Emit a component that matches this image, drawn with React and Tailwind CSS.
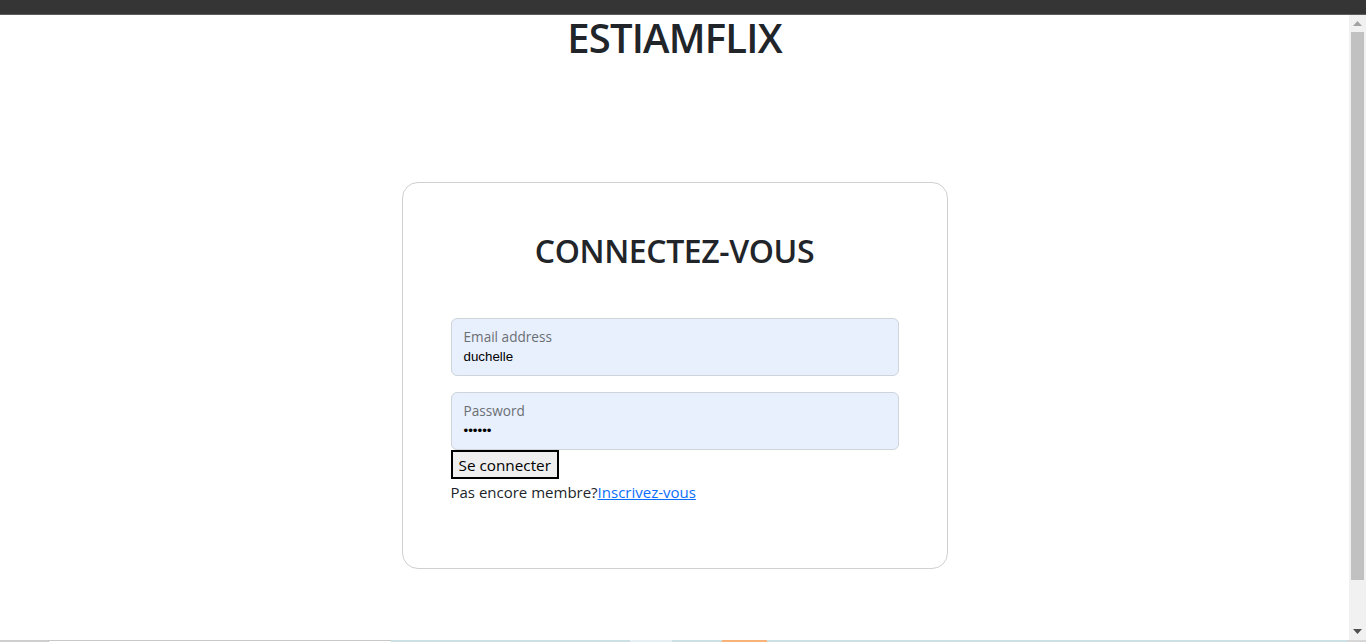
export default function App() {
  const sans = { fontFamily: '"Open Sans", "Noto Sans", sans-serif' };
  return (
    <div className="w-[1366px] h-[642px] flex flex-col overflow-hidden bg-white" style={sans}>
      <div className="h-[15px] shrink-0 bg-[#353535] border-b border-[#5c5c5c]" />
      <div className="flex-1 flex min-h-0">
        <main className="flex-1 flex flex-col items-center text-[#212529]">
          <h1 className="text-[40px] leading-[48px] font-semibold mt-[-1px] tracking-[-0.8px]">ESTIAMFLIX</h1>
          <div className="mt-[120px] w-[546px] h-[387px] border border-[#d0d0d0] rounded-[16px] px-12 pt-12">
            <h2 className="text-[32px] leading-[38px] font-semibold text-center tracking-[-0.4px] mt-[1px]">CONNECTEZ-VOUS</h2>
            <div className="mt-[48px] flex flex-col">
              <div className="h-[58px] rounded-[6px] border border-[#ced4da] bg-[#e8f0fe] px-3 pt-[9px] flex flex-col">
                <span className="text-[13.6px] leading-[18px] text-[#6b6e72]">Email address</span>
                <span className="text-[13.33px] leading-[18px] text-black mt-[2px]" style={{ fontFamily: '"Liberation Sans", Arial, sans-serif' }}>duchelle</span>
              </div>
              <div className="mt-4 h-[58px] rounded-[6px] border border-[#ced4da] bg-[#e8f0fe] px-3 pt-[9px] flex flex-col">
                <span className="text-[13.6px] leading-[18px] text-[#6b6e72]">Password</span>
                <span className="text-[13.33px] leading-[18px] text-black mt-[2px]" style={{ fontFamily: '"Liberation Sans", Arial, sans-serif' }}>••••••</span>
              </div>
              <div className="flex">
                <button className="border-2 border-black bg-[#efefef] px-[6px] h-[29px] text-[15.3px] leading-[24px] text-black">Se connecter</button>
              </div>
              <p className="text-[15px] leading-[24px] mt-[1px]">
                Pas encore membre?<a href="#" className="text-[#0d6efd] underline">Inscrivez-vous</a>
              </p>
            </div>
          </div>
        </main>
        <div className="w-[17px] shrink-0 bg-[#f1f1f1] flex flex-col items-center">
          <div className="h-[17px] flex items-center justify-center">
            <svg width="9" height="5" viewBox="0 0 9 5"><path d="M4.5 0 L9 5 L0 5 Z" fill="#a3a3a3" /></svg>
          </div>
          <div className="w-[13px] h-[548px] bg-[#c1c1c1]" />
          <div className="flex-1" />
          <div className="h-[17px] flex items-center justify-center">
            <svg width="9" height="5" viewBox="0 0 9 5"><path d="M0 0 L9 0 L4.5 5 Z" fill="#505050" /></svg>
          </div>
        </div>
      </div>
      <div className="h-[2px] shrink-0 flex">
        <div className="w-[48px] bg-[#cfcfcf]" />
        <div className="w-[343px] bg-white border-t border-l border-[#c8c8c8]" />
        <div className="w-[239px] bg-[#cde0e6]" />
        <div className="w-[42px] bg-[#e6f0f2]" />
        <div className="w-[50px] bg-[#cde0e6]" />
        <div className="w-[45px] bg-[#f7b37a]" />
        <div className="w-[580px] bg-[#cde0e6]" />
        <div className="flex-1 bg-[#d6d6d6]" />
      </div>
    </div>
  );
}
